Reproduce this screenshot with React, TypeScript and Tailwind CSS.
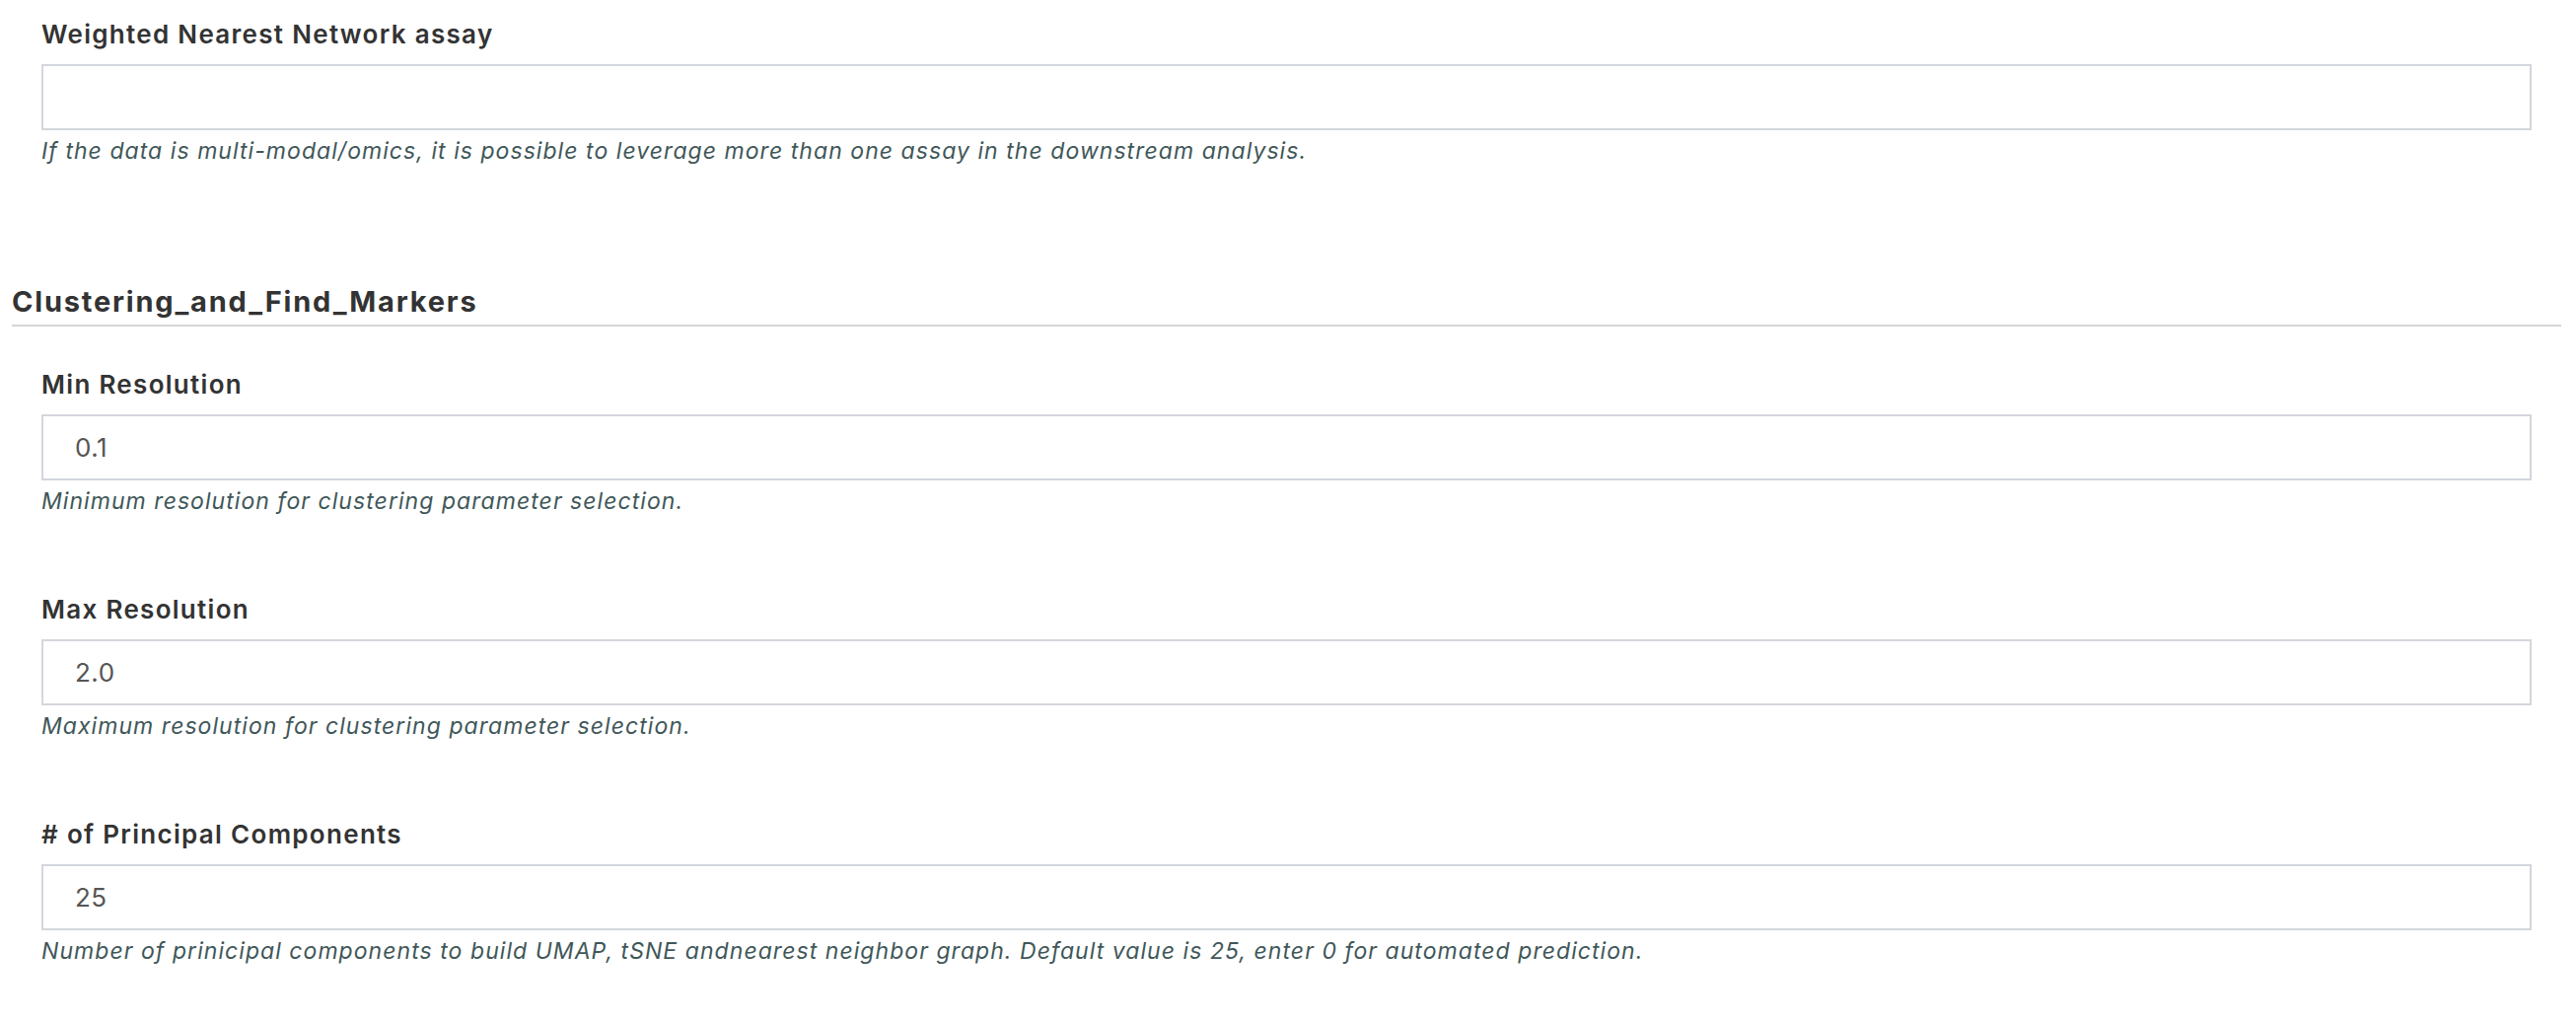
import React from "react";

type FieldProps = { label: string; value: string; help: string; last?: boolean };

function Field({ label, value, help, last }: FieldProps) {
  return (
    <div className={last ? "" : "mb-[79px]"}>
      <label className="block text-[26px] leading-[32px] font-semibold tracking-[1.3px] text-[#333333] mb-[14px]">{label}</label>
      <input
        readOnly
        value={value}
        className="block w-full h-[67px] border-2 border-[#d3d6dc] bg-white pl-[32px] text-[26px] tracking-[0.5px] text-[#555555] outline-none"
        style={{ fontFamily: "Inter, sans-serif" }}
      />
      <p className="mt-[6px] text-[23px] leading-[30px] italic tracking-[1.05px] text-[#3f5759]">{help}</p>
    </div>
  );
}

export default function App() {
  return (
    <div className="w-full h-[1038px] overflow-hidden bg-white" style={{ fontFamily: "Inter, 'Noto Sans', sans-serif" }}>
      <div className="pl-[12px] pr-[15px] pt-[19px]">
        <div className="px-[30px]">
          <Field
            label="Weighted Nearest Network assay"
            value=""
            help="If the data is multi-modal/omics, it is possible to leverage more than one assay in the downstream analysis."
            last
          />
        </div>
        <h2 className="mt-[120px] text-[29px] leading-[36px] font-bold tracking-[1.8px] text-[#333333] pb-[5px] border-b-2 border-[#d6d6da]">
          Clustering_and_Find_Markers
        </h2>
        <div className="px-[30px] pt-[43px]">
          <Field label="Min Resolution" value="0.1" help="Minimum resolution for clustering parameter selection." />
          <Field label="Max Resolution" value="2.0" help="Maximum resolution for clustering parameter selection." />
          <Field
            label="# of Principal Components"
            value="25"
            help="Number of prinicipal components to build UMAP, tSNE andnearest neighbor graph. Default value is 25, enter 0 for automated prediction."
            last
          />
        </div>
      </div>
    </div>
  );
}
